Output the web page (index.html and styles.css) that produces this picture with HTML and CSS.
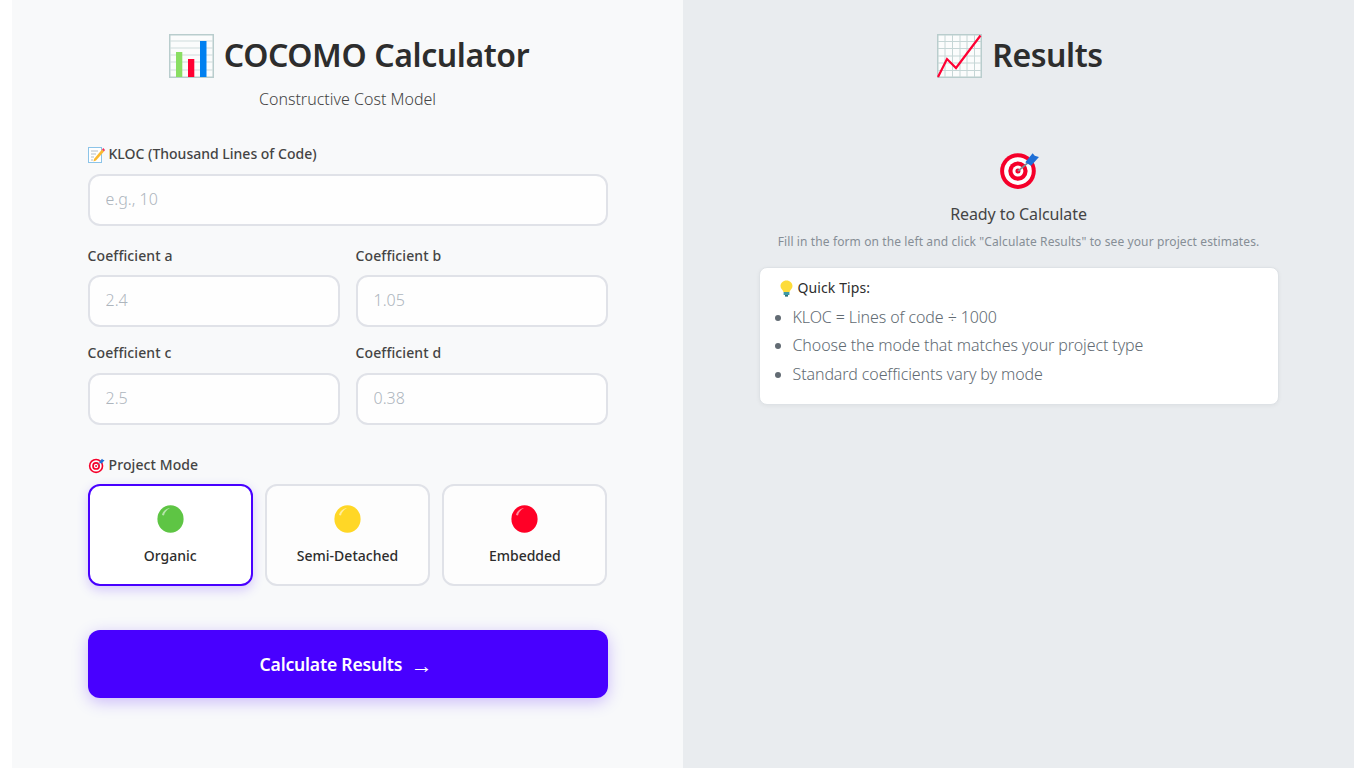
FILE: index.html
```html
<!DOCTYPE html>
<html lang="en">
  <head>
    <meta charset="UTF-8" />
    <meta name="viewport" content="width=device-width, initial-scale=1.0" />
    <title>COCOMO Calculator</title>
    <link rel="stylesheet" href="styles.css">
  </head>

  <body>
    <svg class="defs">
      <symbol id="target" viewBox="0 0 40 40">
        <circle cx="19" cy="21" r="17" fill="#f5002a" />
        <circle cx="19" cy="21" r="13.2" fill="#fff" />
        <circle cx="19" cy="21" r="9.2" fill="#f5002a" />
        <circle cx="19" cy="21" r="5.2" fill="#fff" />
        <circle cx="19" cy="21" r="2.4" fill="#f5002a" />
        <path d="M19 21 L31 11" stroke="#7d8c96" stroke-width="1.6" />
        <path d="M26 12.5 L33 4 L35 6.5 L39 7.5 L31.5 16 Z" fill="#1f6fd6" />
      </symbol>
      <symbol id="dot" viewBox="0 0 27 28">
        <ellipse cx="13.5" cy="14" rx="13.1" ry="13.8" fill="currentColor" />
        <path d="M5 10 C6 6 9 3.5 13 3 C9.5 5 7.5 7.5 7 10.5 Z" fill="#fff" opacity="0.55" />
      </symbol>
    </svg>
    <div class="container">
      <div class="panel left">
        <h1>
          <svg class="title-icon" viewBox="0 0 45 44">
            <rect x="0.75" y="0.75" width="43.5" height="42.5" fill="#fbfcfc" stroke="#b9cdcd" stroke-width="1.5" />
            <path d="M1 7H44M1 14H44M1 21H44M1 28H44M1 36H44" stroke="#cfdcdc" stroke-width="1" />
            <rect x="7" y="18" width="6.3" height="25" fill="#8ade63" />
            <rect x="19" y="25" width="6.3" height="18" fill="#ff0033" />
            <rect x="31" y="7" width="6.5" height="36" fill="#0080f0" />
          </svg>
          <span>COCOMO Calculator</span>
        </h1>
        <p class="subtitle">Constructive Cost Model</p>
        <form class="form">
          <label class="label kloc-label" for="kloc">
            <svg class="label-icon" viewBox="0 0 17 17">
              <rect x="0.5" y="1.5" width="13" height="15" fill="#fff" stroke="#8cc4e8" />
              <path d="M3 5H10M3 8H8M3 11H6M3 14H5" stroke="#a9b8c2" stroke-width="0.9" />
              <path d="M6 13 L14 3.5 L16 5.5 L8 14.5 L5.5 15.5 Z" fill="#fbb92f" />
              <path d="M14 3.5 L15.3 2 L17 4 L16 5.5 Z" fill="#f0335a" />
            </svg>
            KLOC (Thousand Lines of Code)
          </label>
          <input class="field" type="text" id="kloc" placeholder="e.g., 10" />
          <div class="row first">
            <div class="col">
              <label class="label" for="a">Coefficient a</label>
              <input class="field" type="text" id="a" placeholder="2.4" />
            </div>
            <div class="col">
              <label class="label" for="b">Coefficient b</label>
              <input class="field" type="text" id="b" placeholder="1.05" />
            </div>
          </div>
          <div class="row">
            <div class="col">
              <label class="label" for="c">Coefficient c</label>
              <input class="field" type="text" id="c" placeholder="2.5" />
            </div>
            <div class="col">
              <label class="label" for="d">Coefficient d</label>
              <input class="field" type="text" id="d" placeholder="0.38" />
            </div>
          </div>
          <div class="label mode-label">
            <svg class="label-icon"><use href="#target" /></svg>
            Project Mode
          </div>
          <div class="modes">
            <div class="mode active">
              <svg class="dot green"><use href="#dot" /></svg>
              <span class="mode-name">Organic</span>
            </div>
            <div class="mode">
              <svg class="dot yellow"><use href="#dot" /></svg>
              <span class="mode-name">Semi-Detached</span>
            </div>
            <div class="mode">
              <svg class="dot red"><use href="#dot" /></svg>
              <span class="mode-name">Embedded</span>
            </div>
          </div>
          <button type="button" class="btn">Calculate Results <span class="arrow">→</span></button>
        </form>
      </div>
      <div class="panel right">
        <h1>
          <svg class="title-icon" viewBox="0 0 45 44">
            <rect x="0.75" y="0.75" width="43.5" height="42.5" fill="#fbfcfc" stroke="#b9cdcd" stroke-width="1.5" />
            <path d="M8 1V43M15.5 1V43M23 1V43M30 1V43M37.5 1V43M1 7.5H44M1 14.5H44M1 22H44M1 29H44M1 36.5H44" stroke="#c6d6d6" stroke-width="1" />
            <path d="M1 43 L10 25 L19 34 L43.5 1.5" fill="none" stroke="#ff0033" stroke-width="2.2" />
          </svg>
          <span>Results</span>
        </h1>
        <div class="ready">
          <svg class="ready-icon"><use href="#target" /></svg>
          <h3>Ready to Calculate</h3>
          <p class="hint">Fill in the form on the left and click "Calculate Results" to see your project estimates.</p>
          <div class="tips">
            <h4>
              <svg class="bulb" viewBox="0 0 13 17">
                <path d="M6.5 0.5 C10 0.5 12.5 3 12.5 6 C12.5 8.5 10.5 9.5 9.5 12 H3.5 C2.5 9.5 0.5 8.5 0.5 6 C0.5 3 3 0.5 6.5 0.5 Z" fill="#fddc3a" />
                <rect x="3.6" y="12" width="5.8" height="3" fill="#3f9aa5" />
                <rect x="5" y="15" width="3" height="1.6" fill="#2d6f7a" />
              </svg>
              Quick Tips:
            </h4>
            <ul>
              <li>KLOC = Lines of code ÷ 1000</li>
              <li>Choose the mode that matches your project type</li>
              <li>Standard coefficients vary by mode</li>
            </ul>
          </div>
        </div>
      </div>
    </div>
  </body>
</html>
```
FILE: styles.css
```css
* {
  padding: 0;
  margin: 0;
  box-sizing: border-box;
}

body {
  background: #fff;
  font-family: "Noto Sans", sans-serif;
  color: #2d2d2d;
}

.defs {
  display: none;
}

.container {
  display: flex;
  width: 1342px;
  height: 768px;
  margin: 0 auto;
  overflow: hidden;
}

.panel {
  width: 671px;
  display: flex;
  flex-direction: column;
  align-items: center;
  padding-top: 32px;
}

.left {
  background: #f8f9fa;
}

.right {
  background: #e9ecef;
}

h1 {
  display: flex;
  align-items: center;
  gap: 10px;
  height: 44px;
  padding-left: 3px;
  font-size: 32px;
  font-weight: 600;
  letter-spacing: -0.4px;
  color: #2d2d2d;
}

.title-icon {
  width: 45px;
  height: 44px;
  flex: none;
  margin-top: 4px;
}

.subtitle {
  margin-top: 11px;
  font-size: 16px;
  font-weight: 300;
  line-height: 24px;
  color: #444;
}

.form {
  width: 520px;
  margin-top: 33px;
  display: flex;
  flex-direction: column;
}

.label {
  display: flex;
  align-items: center;
  gap: 4px;
  font-size: 14px;
  font-weight: 500;
  line-height: 20px;
  letter-spacing: 0.1px;
  color: #444;
  margin-bottom: 10px;
}

.kloc-label {
  letter-spacing: 0;
}

.label-icon {
  width: 17px;
  height: 17px;
  flex: none;
}

.field {
  display: block;
  width: 100%;
  height: 52px;
  padding: 0 16px 3px;
  border: 2px solid #e0e2e8;
  border-radius: 12px;
  background: #fefefe;
  font-family: inherit;
  font-size: 16px;
  font-weight: 300;
}

.field::placeholder {
  color: #adb5bd;
}

.row {
  display: flex;
  gap: 16px;
  margin-top: 16px;
}

.first {
  margin-top: 20px;
}

.first .label {
  margin-bottom: 9px;
}

.col {
  flex: 1;
}

.mode-label {
  margin-top: 30px;
  margin-bottom: 9px;
}

.modes {
  display: flex;
  gap: 12px;
}

.mode {
  flex: 1;
  height: 102px;
  display: flex;
  flex-direction: column;
  align-items: center;
  padding-top: 19px;
  border: 2px solid #e0e2e8;
  border-radius: 12px;
  background: #fdfdfd;
}

.active {
  border-color: #4800ff;
  background: #fff;
  box-shadow: 0 4px 12px rgba(72, 0, 255, 0.2);
}

.dot {
  width: 27px;
  height: 28px;
}

.green {
  color: #5ec544;
}

.yellow {
  color: #ffd726;
}

.red {
  color: #ff0026;
}

.mode-name {
  margin-top: 13px;
  font-size: 14px;
  font-weight: 500;
  line-height: 20px;
}

.btn {
  margin-top: 44px;
  height: 68px;
  padding-top: 2px;
  border: none;
  border-radius: 12px;
  background: #4800ff;
  color: #fff;
  font-family: inherit;
  font-size: 17.6px;
  font-weight: 600;
  letter-spacing: -0.2px;
  box-shadow: 0 4px 16px rgba(72, 0, 255, 0.25);
}

.arrow {
  margin: 0 3px 0 4px;
  font-family: "Liberation Sans", sans-serif;
  font-size: 22px;
  font-weight: 400;
  vertical-align: -2px;
}

.ready {
  width: 520px;
  margin-top: 73px;
  display: flex;
  flex-direction: column;
  align-items: center;
}

.ready-icon {
  width: 42px;
  height: 42px;
}

h3 {
  margin-top: 11px;
  font-size: 16px;
  font-weight: 400;
  line-height: 24px;
  letter-spacing: -0.1px;
  color: #444;
}

.hint {
  margin-top: 6px;
  font-size: 12px;
  line-height: 20px;
  letter-spacing: 0.11px;
  color: #868e96;
}

.tips {
  width: 100%;
  height: 138px;
  margin-top: 15px;
  padding: 8px 18px;
  background: #fff;
  border: 1px solid #dee2e6;
  border-radius: 8px;
  box-shadow: 0 1px 4px rgba(0, 0, 0, 0.05);
}

h4 {
  display: flex;
  align-items: center;
  gap: 5px;
  margin-left: 2px;
  font-size: 14px;
  font-weight: 400;
  line-height: 24px;
  letter-spacing: 0.1px;
}

.bulb {
  width: 13px;
  height: 17px;
  flex: none;
}

ul {
  margin-top: 3px;
  padding-left: 15px;
  color: #626b73;
  font-size: 16px;
  font-weight: 300;
  letter-spacing: -0.1px;
}

li {
  line-height: 28.4px;
}
```
